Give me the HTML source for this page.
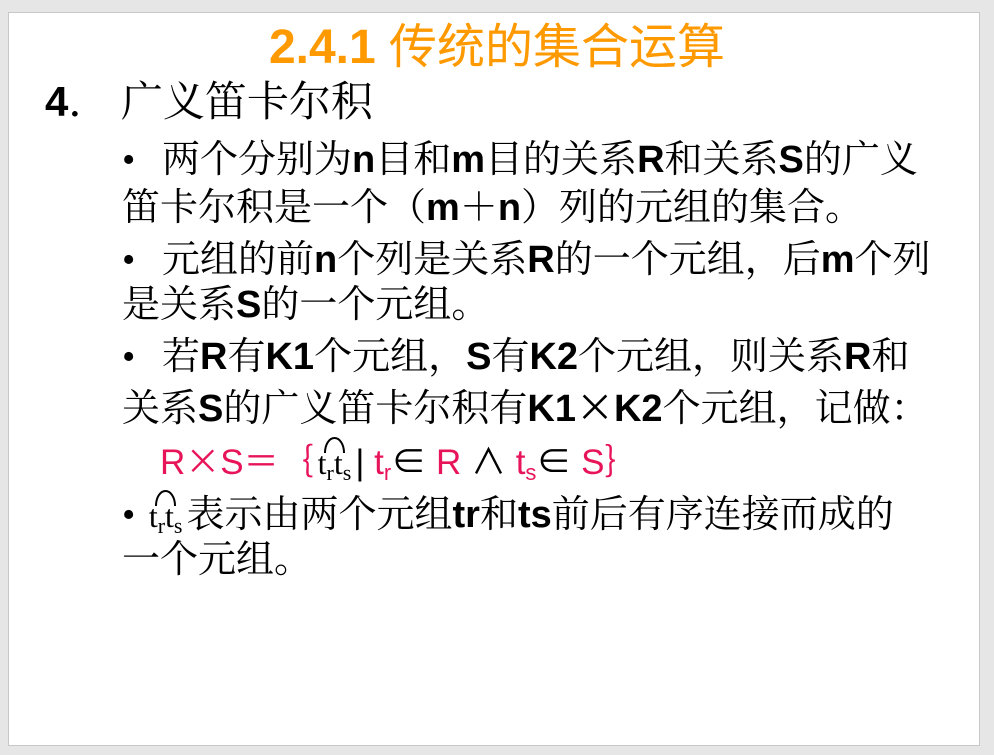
<!DOCTYPE html>
<html><head><meta charset="utf-8"><style>
body{margin:0;width:994px;height:755px;background:#e6e6e6;overflow:hidden;position:relative}
.slide{position:absolute;left:8px;top:12px;width:970px;height:732px;background:#fff;border:1px solid #c8c8c8}
.l{position:absolute;white-space:nowrap;font-family:"Liberation Serif","Noto Serif CJK SC",serif;font-size:38px;line-height:40px;color:#000}
b{font-family:"Liberation Sans",sans-serif;font-weight:bold}
.t{left:0;width:994px;text-align:center;top:22px;font-family:"Liberation Sans","Noto Sans CJK SC",sans-serif;font-size:48px;line-height:52px;color:#ff9900}
.red{color:#e8145a;font-family:"Liberation Sans","Noto Sans CJK SC",sans-serif}
.k{color:#000}
.x{font-family:"Noto Sans CJK SC",sans-serif}
.tt{display:inline-block;position:relative;font-family:"Liberation Serif",serif;font-size:32px;color:#000;margin:0 4px}
.tt:before{content:"";position:absolute;left:6px;right:6px;top:-6px;height:14px;border:2px solid #000;border-bottom:none;border-radius:50% 50% 0 0/100% 100% 0 0}
sub{font-size:22px;vertical-align:-6px}
.bu{display:inline-block;width:40px}
</style></head><body>
<div class="slide"></div>
<div class="l t"><b>2.4.1</b> 传统的集合运算</div>
<div class="l" style="left:45px;top:82px;font-size:42px"><b>4</b>．&nbsp;广义笛卡尔积</div>
<div class="l" style="left:122px;top:140px"><span class="bu">•</span>两个分别为<b>n</b>目和<b>m</b>目的关系<b>R</b>和关系<b>S</b>的广义</div>
<div class="l" style="left:122px;top:188px">笛卡尔积是一个（<b>m</b>＋<b>n</b>）列的元组的集合。</div>
<div class="l" style="left:122px;top:240px"><span class="bu">•</span>元组的前<b>n</b>个列是关系<b>R</b>的一个元组，后<b>m</b>个列</div>
<div class="l" style="left:122px;top:285px">是关系<b>S</b>的一个元组。</div>
<div class="l" style="left:122px;top:337px"><span class="bu">•</span>若<b>R</b>有<b>K1</b>个元组，<b>S</b>有<b>K2</b>个元组，则关系<b>R</b>和</div>
<div class="l" style="left:122px;top:385px">关系<b>S</b>的广义笛卡尔积有<b>K1</b><span class="x">×</span><b>K2</b>个元组，记做：</div>
<div class="l red" style="left:160px;top:440px;font-size:35px">R<span class="x">×</span>S＝｛<span class="tt">t<sub>r</sub>t<sub>s</sub></span><span class="k">|</span> t<sub>r</sub><span class="k">∈</span> R <span class="k">∧</span> t<sub>s</sub><span class="k">∈</span> S｝</div>
<div class="l" style="left:122px;top:495px">•&nbsp;<span class="tt">t<sub>r</sub>t<sub>s</sub></span>表示由两个元组<b>tr</b>和<b>ts</b>前后有序连接而成的</div>
<div class="l" style="left:122px;top:540px">一个元组。</div>
</body></html>
